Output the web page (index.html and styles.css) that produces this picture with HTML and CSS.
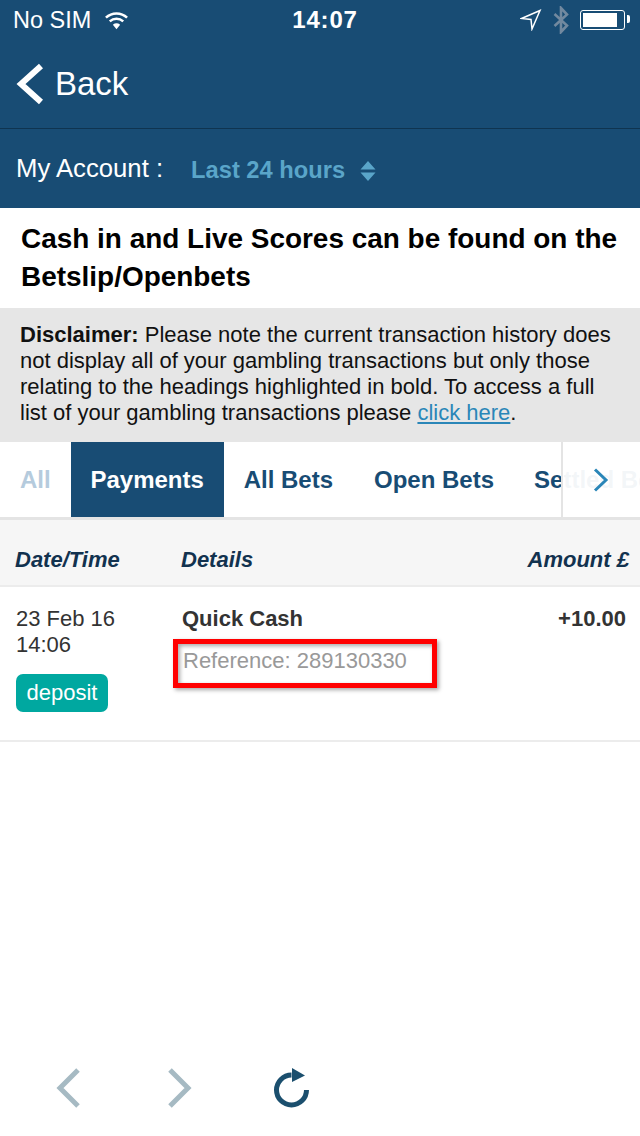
FILE: index.html
```html
<!DOCTYPE html>
<html lang="en">
<head>
    <meta charset="UTF-8">
    <meta name="viewport" content="width=device-width, initial-scale=1.0">
    <title>My Account</title>
    <link rel="stylesheet" href="styles.css">
</head>
<body>
    <div class="page">
        <div class="status-bar">
            <div class="status-left">
                <span>No SIM</span>
                <svg class="wifi" width="25" height="20" viewBox="0 0 26 20">
                    <path d="M2 7.500a16 16 0 0 1 22 0M6 11.500a10.500 10.500 0 0 1 14 0" fill="none" stroke="#fff" stroke-width="2.600"/>
                    <path d="M9.200 15a6 6 0 0 1 7.600 0L13 19.500z" fill="#fff"/>
                </svg>
            </div>
            <div class="status-time">14:07</div>
            <div class="status-right">
                <svg width="22" height="22" viewBox="0 0 22 22">
                    <path d="M1.500 9.500 20 1.500 12 20 11 10.500z" fill="none" stroke="#fff" stroke-width="1.500" stroke-linejoin="miter"/>
                </svg>
                <svg class="bluetooth" width="16" height="28" viewBox="0 0 16 28">
                    <path d="M1.500 8 14 19.500 8 26V2l6 6.500L1.500 20" fill="none" stroke="#72899f" stroke-width="2.600"/>
                </svg>
                <div class="battery"><div class="battery-fill"></div></div>
            </div>
        </div>

        <div class="nav-bar">
            <svg width="28" height="42" viewBox="0 0 28 42">
                <path d="M25 3 5 21l20 18" fill="none" stroke="#fff" stroke-width="6"/>
            </svg>
            <span class="back-label">Back</span>
        </div>

        <div class="account-bar">
            <span class="account-title">My Account :</span>
            <span class="account-range">Last 24 hours</span>
            <svg width="16" height="20" viewBox="0 0 16 20">
                <path d="M8 0l7.500 8.500H.5zM8 20 .5 11.500h15z" fill="#5aa5c9"/>
            </svg>
        </div>

        <div class="notice">Cash in and Live Scores can be found on the Betslip/Openbets</div>

        <div class="disclaimer">
            <b>Disclaimer:</b> Please note the current transaction history does not display all of your gambling transactions but only those relating to the headings highlighted in bold. To access a full list of your gambling transactions please <a href="#">click here</a>.
        </div>

        <div class="tabs">
            <div class="tab tab-faded">All</div>
            <div class="tab tab-active">Payments</div>
            <div class="tab">All Bets</div>
            <div class="tab tab-open">Open Bets</div>
            <div class="tab">Settled Bets</div>
            <div class="tab-more">
                <svg width="16" height="24" viewBox="0 0 16 24">
                    <path d="M2 1.500 13 12 2 22.500" fill="none" stroke="#2a86b8" stroke-width="3"/>
                </svg>
            </div>
        </div>

        <div class="table-head">
            <div class="col-date">Date/Time</div>
            <div class="col-details">Details</div>
            <div class="col-amount">Amount £</div>
        </div>

        <div class="table-row">
            <div class="col-date">
                <div class="row-date">23 Feb 16<br>14:06</div>
                <span class="tag">deposit</span>
            </div>
            <div class="col-details">
                <div class="row-title">Quick Cash</div>
                <div class="row-ref">Reference: 289130330</div>
            </div>
            <div class="col-amount row-amount">+10.00</div>
            <!-- red annotation drawn over the screenshot -->
            <div class="highlight-box"></div>
        </div>

        <div class="toolbar">
            <svg width="29" height="42" viewBox="0 0 29 42">
                <path d="M23 3 5 21l18 18" fill="none" stroke="#a6bac3" stroke-width="5"/>
            </svg>
            <svg width="29" height="42" viewBox="0 0 29 42">
                <path d="M6 3l18 18L6 39" fill="none" stroke="#a6bac3" stroke-width="5"/>
            </svg>
            <svg width="40" height="42" viewBox="0 0 40 42">
                <path d="M33.500 23a15 15 0 1 1-15-15" fill="none" stroke="#1b4f6e" stroke-width="5"/>
                <path d="M19 1l13 7.500L19 15z" fill="#1b4f6e"/>
            </svg>
        </div>
    </div>
</body>
</html>
```

FILE: styles.css
```css
* {
    box-sizing: border-box;
}

body {
    margin: 0;
    font-family: "Liberation Sans", Arial, sans-serif;
    background-color: white;
}

.page {
    width: 640px;
    height: 1136px;
    display: flex;
    flex-direction: column;
    overflow: hidden;
}

.status-bar {
    height: 40px;
    padding: 0 11px 0 13px;
    background-color: #184c74;
    color: white;
    display: flex;
    align-items: center;
    justify-content: space-between;
    font-size: 23.500px;
}

.status-left {
    width: 208px;
    display: flex;
    align-items: center;
    gap: 13px;
}

.status-time {
    font-size: 24px;
    font-weight: bold;
    letter-spacing: 0.8px;
}

.status-right {
    width: 200px;
    display: flex;
    align-items: center;
    justify-content: flex-end;
    gap: 11px;
}

.battery {
    width: 45px;
    height: 20px;
    padding: 2px;
    border: 1.5px solid white;
    border-radius: 3px;
    margin-right: 4px;
    position: relative;
}

.battery::after {
    content: "";
    position: absolute;
    right: -6px;
    top: 4px;
    width: 3px;
    height: 8px;
    background-color: white;
    border-radius: 0 2px 2px 0;
}

.battery-fill {
    width: 34px;
    height: 100%;
    background-color: white;
}

.nav-bar {
    height: 89px;
    padding: 0 0 0 16px;
    background-color: #184c74;
    border-bottom: 1px solid #0f3450;
    color: white;
    display: flex;
    align-items: center;
    gap: 11px;
}

.back-label {
    font-size: 33px;
}

.account-bar {
    height: 79px;
    padding: 0 0 0 16px;
    background-color: #184c74;
    color: white;
    display: flex;
    align-items: center;
}

.account-title {
    font-size: 25.700px;
}

.account-range {
    margin-left: 28px;
    margin-right: 15px;
    padding-top: 3px;
    font-size: 23.700px;
    font-weight: bold;
    color: #5aa5c9;
}

.account-bar svg {
    margin-top: 4px;
}

.notice {
    height: 100px;
    padding: 12px 20px 0 21px;
    font-size: 27.950px;
    line-height: 38px;
    font-weight: bold;
    color: black;
}

.disclaimer {
    height: 134px;
    padding: 14px 20px 0 20px;
    background-color: #e6e6e6;
    font-size: 22px;
    line-height: 26px;
    color: #111;
}

.disclaimer a {
    color: #2a86b8;
}

.tabs {
    height: 78px;
    flex-shrink: 0;
    padding-left: 20px;
    border-bottom: 3px solid #e4e4e4;
    display: flex;
    font-size: 24px;
    font-weight: bold;
    color: #184c74;
    white-space: nowrap;
    position: relative;
    overflow: hidden;
}

.tab {
    flex-shrink: 0;
    padding-top: 24px;
    margin-right: 41px;
}

.tab-open {
    margin-right: 40px;
}

.tab-faded {
    color: #b5cbdd;
    margin-right: 20px;
}

.tab-active {
    width: 153px;
    margin-right: 20px;
    text-align: center;
    background-color: #184c74;
    color: white;
}

.tab-more {
    position: absolute;
    top: 0;
    right: 0;
    bottom: 0;
    width: 79px;
    padding: 26px 0 0 30px;
    background-color: rgba(255, 255, 255, 0.95);
    border-left: 2px solid #e4e4e4;
}

.table-head {
    height: 67px;
    flex-shrink: 0;
    padding: 15px 11px 0 15px;
    background-color: #f6f6f6;
    border-bottom: 2px solid #ececec;
    display: flex;
    align-items: center;
    font-size: 22px;
    font-weight: bold;
    font-style: italic;
    color: #12324f;
}

.col-date {
    width: 166px;
}

.col-details {
    flex: 1;
}

.table-row {
    height: 155px;
    flex-shrink: 0;
    padding: 19px 14px 0 16px;
    border-bottom: 2px solid #ececec;
    display: flex;
    position: relative;
    font-size: 22px;
}

.row-date {
    line-height: 26px;
    color: #333;
}

.tag {
    display: inline-block;
    margin-top: 16px;
    padding: 0 10.500px;
    height: 38px;
    line-height: 37px;
    background-color: #00a8a0;
    border-radius: 7px;
    color: white;
}

.row-title {
    line-height: 26px;
    font-weight: bold;
    color: #333;
}

.row-ref {
    margin-top: 16px;
    padding-left: 1px;
    line-height: 26px;
    color: #999;
}

.row-amount {
    line-height: 26px;
    font-weight: bold;
    color: #333;
}

.highlight-box {
    position: absolute;
    left: 173px;
    top: 52px;
    width: 264px;
    height: 49px;
    border: 5px solid #f00;
    box-shadow: 2px 2px 4px rgba(0, 0, 0, 0.35), inset 2px 2px 4px rgba(0, 0, 0, 0.35);
}

.toolbar {
    flex: 1;
    padding: 0 0 27px 55px;
    display: flex;
    align-items: flex-end;
    gap: 80px;
}
```
